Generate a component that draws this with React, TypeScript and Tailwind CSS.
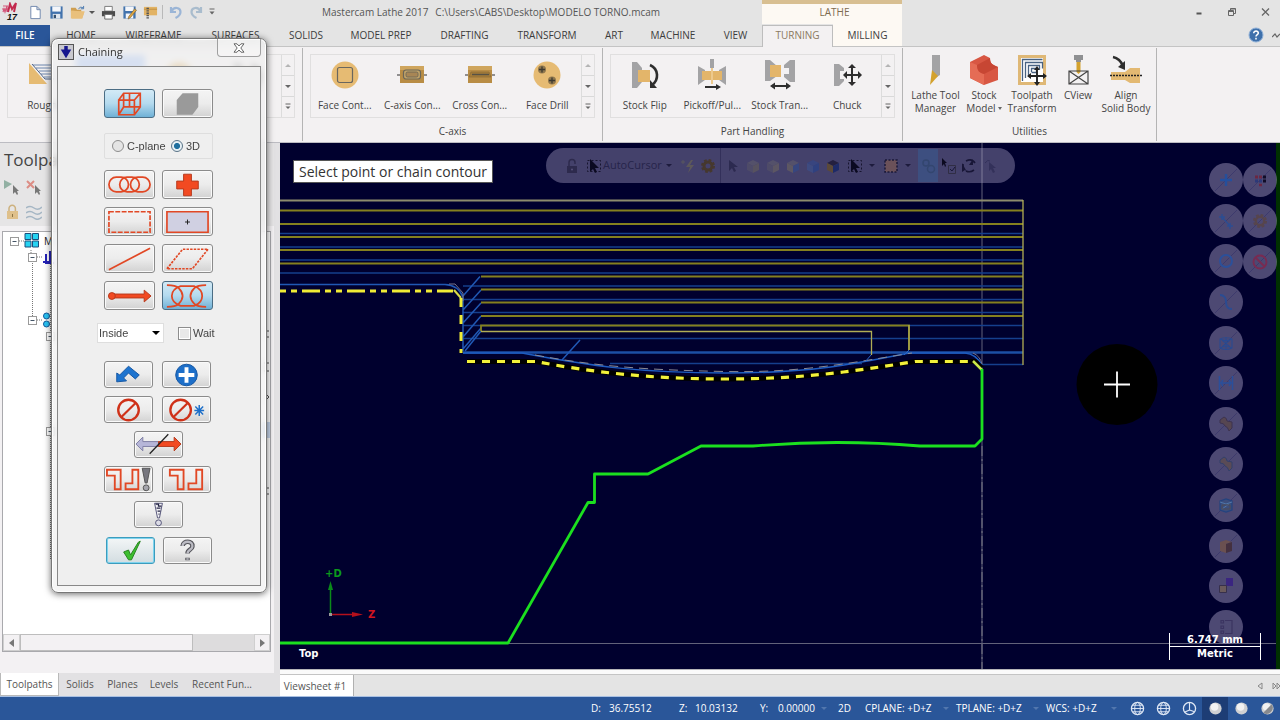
import React from "react";
import type { ReactNode } from "react";

type IconProps = { children: ReactNode; box?: string; className?: string };

function Icon({ children, box = "0 0 16 16", className = "size-4" }: IconProps) {
  return (
    <svg viewBox={box} className={className} fill="none" aria-hidden="true">
      {children}
    </svg>
  );
}

/* ---------- title bar ---------- */

const quickIcons: { label: string; art: ReactNode }[] = [
  { label: "New", art: <path d="M3 1.500h6.500l3.500 3.500v9.500h-10zM9.500 1.500v3.500h3.500" fill="#fff" stroke="#6f86ad" /> },
  {
    label: "Save",
    art: (
      <>
        <path d="M1.500 1.500h13v13h-13z" fill="#4273ad" />
        <path d="M3.500 1.500h9v5.500h-9z" fill="#f4f6fa" />
        <path d="M4 9.500h8v5H4z" fill="#dfe6ef" />
        <path d="M5 10.500h2.500v3.500H5z" fill="#35506f" />
      </>
    ),
  },
  {
    label: "Open",
    art: (
      <>
        <path d="M1 3h5l1.500 2H12v3H1z" fill="#cf9f51" />
        <path d="M1 14.500V6h3L2 14.500h11l2.500-7.500H4z" fill="#e9c07c" />
        <path d="M1 6h3l11.500 1-2.500 7.500H1z" fill="#e9c07c" />
        <path d="M9 4q2.500-3 5-1M14.500 1v3h-3" stroke="#4776ad" />
      </>
    ),
  },
];

const quickIcons2: { label: string; art: ReactNode }[] = [
  {
    label: "Print",
    art: (
      <>
        <path d="M4 1.500h8v5H4z" fill="#fff" stroke="#777" />
        <path d="M1 6.500h14v5.500H1z" fill="#4c4c4c" />
        <path d="M4 10h8v5H4z" fill="#fff" stroke="#666" />
      </>
    ),
  },
  {
    label: "Save as",
    art: (
      <>
        <path d="M1.500 1.500h13v13h-13z" fill="#4273ad" />
        <path d="M3.500 1.500h9v5h-9zM4 9h8v5.500H4z" fill="#f4f6fa" />
        <path d="M7 12.500L13.500 4l2 1.500-6.500 8-2.500 1.500z" fill="#e0a63f" stroke="#6b5a38" strokeWidth=".6" />
      </>
    ),
  },
  {
    label: "Zip",
    art: (
      <>
        <path d="M1 2h14v9H1z" fill="#e2b365" />
        <path d="M1 4.500h14" stroke="#c18f3e" />
        <path d="M5 3v12" stroke="#555" strokeWidth="2.600" strokeDasharray="1.500 1" />
      </>
    ),
  },
];

function QuickButton({ label, art }: { label: string; art: ReactNode }) {
  return (
    <button aria-label={label} className="flex size-4 items-center justify-center">
      <Icon className="size-[15px]">{art}</Icon>
    </button>
  );
}

function TitleBar() {
  return (
    <div className="flex h-[24px] bg-[#e4e4e4]">
      <div className="flex w-[322px] shrink-0 items-center pl-px">
        <svg viewBox="0 0 18 20" className="h-[20px] w-[18px]" fill="none" aria-hidden="true">
          <path d="M2 4h5M1 7h6M2 10l1-3 1 3 2-6v6" stroke="#d4567a" strokeWidth="1.200" />
          <path d="M7 10l2-8 2 5 4-6-2 9" stroke="#c22a4e" strokeWidth="2" />
          <text x="6" y="18" fontSize="9" fontWeight="700" fontStyle="italic" fill="#111" fontFamily="Liberation Sans, sans-serif">17</text>
        </svg>
        <div className="ml-2 flex items-center gap-[5px]">
          {quickIcons.map((q) => (
            <QuickButton key={q.label} {...q} />
          ))}
        </div>
        <span className="ml-1 border-x-[3px] border-t-[3px] border-x-transparent border-t-[#555]" />
        <div className="ml-[5px] flex items-center gap-[5px]">
          {quickIcons2.map((q) => (
            <QuickButton key={q.label} {...q} />
          ))}
        </div>
        <span className="ml-[4px] mr-[5px] h-[14px] w-px bg-[#b9b9b9]" />
        <div className="flex items-center gap-1">
          <button aria-label="Undo" className="size-4">
            <Icon><path d="M3 3v5h5M3.500 7.500C6 2 12.500 3.500 12.500 8c0 3-2 4.500-5 6" stroke="#9bb5d6" strokeWidth="2.200" /></Icon>
          </button>
          <button aria-label="Redo" className="size-4">
            <Icon><path d="M13 3v5H8M12.500 7.500C10 2 3.500 3.500 3.500 8c0 3 2 4.500 5 6" stroke="#a9bccd" strokeWidth="2.200" /></Icon>
          </button>
          <Icon className="size-2" box="0 0 8 8"><path d="M1.500 1h5" stroke="#666" /><path d="M1.500 3.500h5L4 6.500z" fill="#666" /></Icon>
        </div>
      </div>
      <div className="flex w-[440px] shrink-0 items-center gap-[7px] text-[#555]">
        <span>Mastercam Lathe 2017</span>
        <span>C:\Users\CABS\Desktop\MODELO TORNO.mcam</span>
      </div>
      <div className="flex w-[140px] shrink-0 items-center justify-center border-t-[4px] border-[#d8bf91] bg-[#fdf9f3] pl-[5px] pb-[4px] text-[#7d6b4f]">
        LATHE
      </div>
      <div className="flex flex-1 items-center justify-end gap-[17px] pr-[7px]">
        <button aria-label="Minimize" className="size-4"><Icon><path d="M5.500 9.500h5" stroke="#555" strokeWidth="2" /></Icon></button>
        <button aria-label="Restore" className="size-4">
          <Icon><path d="M6.500 6.500v-2h5v5h-2M4.500 6.500h5v5h-5zM4.500 7.500h5M6.500 5h5" stroke="#666" /></Icon>
        </button>
        <button aria-label="Close" className="size-4"><Icon><path d="M5 4.500l7 7M12 4.500l-7 7" stroke="#666" strokeWidth="1.300" /></Icon></button>
      </div>
    </div>
  );
}

function Tab({ width, children }: { width: string; children: ReactNode }) {
  return <button className={`shrink-0 text-center text-[#3c3c3c] ${width}`}>{children}</button>;
}

function TabRow() {
  return (
    <div className="flex h-[23px] border-b border-[#c4c4c4] bg-[#e4e4e4]">
      <button className="mt-px w-[50px] shrink-0 bg-[#2a5699] font-semibold text-white">FILE</button>
      <Tab width="w-[62px]">HOME</Tab>
      <Tab width="w-[83px]">WIREFRAME</Tab>
      <Tab width="w-[81px]">SURFACES</Tab>
      <Tab width="w-[60px]">SOLIDS</Tab>
      <Tab width="w-[90px]">MODEL PREP</Tab>
      <Tab width="w-[77px]">DRAFTING</Tab>
      <Tab width="w-[88px]">TRANSFORM</Tab>
      <Tab width="w-[46px]">ART</Tab>
      <Tab width="w-[72px]">MACHINE</Tab>
      <Tab width="w-[53px]">VIEW</Tab>
      <button className="-mb-px mt-px w-[71px] shrink-0 border border-b-0 border-[#bdbdbd] bg-[#f3f1f2] pb-[3px] text-[#8a7960]">TURNING</button>
      <button className="w-[69px] shrink-0 bg-[#fdf9f3] text-[#3c3c3c]">MILLING</button>
      <div className="flex flex-1 items-center justify-end gap-2 overflow-hidden">
        <button aria-label="Help" className="size-4">
          <Icon>
            <circle cx="8" cy="8" r="7" fill="#3e70ab" stroke="#8fb0d8" />
            <path d="M5.700 6.200C5.700 3.300 10.500 3.400 10.300 6.200 10.200 7.600 8 7.700 8 9.600M8 10.800v1.700" stroke="#fff" strokeWidth="1.500" />
          </Icon>
        </button>
        <button aria-label="Collapse ribbon" className="h-4 w-2">
          <Icon className="h-4 w-2" box="0 0 8 16"><path d="M0 10l3-3 2 3 3-3" stroke="#666" strokeWidth="1.200" /></Icon>
        </button>
      </div>
    </div>
  );
}

/* ---------- ribbon ---------- */

function GalleryScroll() {
  return (
    <div className="flex w-[13px] shrink-0 flex-col divide-y divide-[#d9d9d9] border-l border-[#dcdcdc]">
      <button aria-label="Scroll up" className="flex flex-1 items-center justify-center">
        <span className="border-x-[3px] border-b-[3px] border-x-transparent border-b-[#b5b5b5]" />
      </button>
      <button aria-label="Scroll down" className="flex flex-1 items-center justify-center">
        <span className="border-x-[3px] border-t-[3px] border-x-transparent border-t-[#666]" />
      </button>
      <button aria-label="More" className="flex flex-1 items-center justify-center">
        <Icon className="size-2" box="0 0 8 8"><path d="M1.500 1h5" stroke="#666" /><path d="M1.500 3.500h5L4 6z" fill="#666" /></Icon>
      </button>
    </div>
  );
}

function GalleryItem({ label, art }: { label: string; art: ReactNode }) {
  return (
    <button className="flex flex-1 flex-col items-center whitespace-nowrap pt-[3px] text-[#444]">
      <Icon box="0 0 32 32" className="size-8">{art}</Icon>
      <span className="mt-[7px] leading-4">{label}</span>
    </button>
  );
}

function RibbonGroup({ title, children }: { title: string; children: ReactNode }) {
  return (
    <section className="my-px flex w-[300px] shrink-0 flex-col border-r border-[#b4b4b4] px-[7px] pt-[6px]">
      <div className="flex h-[64px] border border-[#e0dfdf]">
        <div className="flex flex-1">{children}</div>
        <GalleryScroll />
      </div>
      <div className="mt-[5px] text-center leading-4 text-[#444]">{title}</div>
    </section>
  );
}

const faceContour = (
  <>
    <circle cx="16" cy="17" r="13.500" fill="#e6bb73" />
    <rect x="8.500" y="9.500" width="15" height="15" rx="2" stroke="#6a675f" strokeWidth="1.200" />
  </>
);
const cAxisContour = (
  <>
    <path d="M1 17h30" stroke="#4d4d4d" strokeWidth="1.200" />
    <path d="M4 8h24v17H4z" fill="#b98d45" /><path d="M4 8h24v4H4z" fill="#cfa55d" />
    <rect x="7.500" y="12" width="17" height="9" rx="2.500" fill="#c3a468" stroke="#6b6658" strokeWidth="1.200" />
    <rect x="10" y="14" width="12" height="5" rx="1.500" fill="#a88655" stroke="#6b6658" strokeWidth=".9" />
  </>
);
const crossContour = (
  <>
    <path d="M1 17h30" stroke="#4d4d4d" strokeWidth="1.200" />
    <path d="M4 8h24v17H4z" fill="#b98d45" /><path d="M4 8h24v4H4z" fill="#cfa55d" />
    <path d="M5 19l2-5h18l2 5z" fill="#a67d3a" stroke="#8a6b35" strokeWidth=".7" />
    <path d="M8 16.500h17" stroke="#575245" strokeWidth="1.500" />
  </>
);
const faceDrill = (
  <>
    <circle cx="16" cy="17" r="13.500" fill="#e6bb73" />
    <g fill="#8f774d">
      <circle cx="11" cy="11.500" r="4" /><circle cx="21" cy="22.500" r="4" />
      <path d="M11 8.500v6M8 11.500h6M21 19.500v6M18 22.500h6" stroke="#3d3930" strokeWidth="1.300" />
    </g>
  </>
);
const stockFlip = (
  <>
    <path d="M3 4h5l5 6v14l-5 6H3z" fill="#a3a3a5" />
    <path d="M9 12h12v12H9z" fill="#e3b56a" />
    <path d="M21 7c9 4 9 15 2 20" stroke="#2e2e2e" strokeWidth="2.600" />
    <path d="M21 22v8h7z" fill="#2e2e2e" />
  </>
);
const pickoff = (
  <>
    <path d="M2 8l7 4v10l-7 5zM30 8l-7 4v10l7 5zM14 1h4v9h-4z" fill="#a3a3a5" />
    <path d="M6 13h20v9H6z" fill="#e3b56a" /><path d="M16 10v16" stroke="#edc98d" strokeWidth="2" />
    <path d="M9 29h13" stroke="#2e2e2e" strokeWidth="2" /><path d="M20 26l5 3-5 3z" fill="#2e2e2e" />
  </>
);
const stockTransfer = (
  <>
    <path d="M1 2h5l7 6v10l-7 5H1zM31 2h-5l-6 5v3h5v6h-5v3l6 5h5z" fill="#a3a3a5" />
    <path d="M6 7h11v12H6z" fill="#e3b56a" />
    <path d="M9 28h15" stroke="#2e2e2e" strokeWidth="2" />
    <path d="M11 24.500L6 28l5 3.500zM22 24.500l5 3.500-5 3.500z" fill="#2e2e2e" />
  </>
);
const chuck = (
  <>
    <path d="M3 6h5l5 4v3H9v8h4v2l-5 5H3z" fill="#a3a3a5" />
    <path d="M13 17h16M21 9v16" stroke="#2e2e2e" strokeWidth="2" />
    <path d="M12 17l4-4v8zM31 17l-4-4v8zM21 6l-4 4h8zM21 28l-4-4h8z" fill="#2e2e2e" />
  </>
);
const rough = (
  <>
    <path d="M3 5l18 21H3z" fill="#e6bb73" />
    <path d="M7 7h20M10 10h17M13 13h14M15 16h12M18 19h9" stroke="#6c86ae" />
    <path d="M6 6l13 15h9" stroke="#4e6487" />
  </>
);

function UtilityButton({ width, lines, art, menu }: { width: string; lines: string[]; art: ReactNode; menu?: boolean }) {
  return (
    <button className={`flex shrink-0 flex-col items-center text-[#444] ${width}`}>
      <Icon box="0 0 32 32" className="size-8">{art}</Icon>
      {lines.map((line, i) => (
        <span key={line} className={`flex items-center gap-[2px] whitespace-nowrap leading-[13px] ${i === 0 ? "mt-[3px]" : ""}`}>
          {line}
          {menu && i === 1 && <span className="border-x-[2px] border-t-[3px] border-x-transparent border-t-[#666]" />}
        </span>
      ))}
    </button>
  );
}

function Ribbon() {
  return (
    <div className="flex h-[96px] overflow-hidden border-b border-[#bcbcc2] bg-[#f3f1f2]">
      <section className="my-px flex w-[303px] shrink-0 flex-col border-r border-[#b4b4b4] px-[7px] pt-[6px]">
        <div className="flex h-[64px] border border-[#e0dfdf]">
          <div className="flex flex-1">
            <GalleryItem label="Rough" art={rough} />
            <div className="h-full flex-1 bg-[#a9c4f2]" />
            <div className="flex flex-1 justify-center pt-1"><Icon box="0 0 32 32" className="size-8">{faceContour}</Icon></div>
            <div className="flex flex-1 justify-center pt-1"><Icon box="0 0 32 32" className="size-8">{stockFlip}</Icon></div>
          </div>
          <GalleryScroll />
        </div>
      </section>
      <RibbonGroup title="C-axis">
        <GalleryItem label="Face Cont..." art={faceContour} />
        <GalleryItem label="C-axis Con..." art={cAxisContour} />
        <GalleryItem label="Cross Con..." art={crossContour} />
        <GalleryItem label="Face Drill" art={faceDrill} />
      </RibbonGroup>
      <RibbonGroup title="Part Handling">
        <GalleryItem label="Stock Flip" art={stockFlip} />
        <GalleryItem label="Pickoff/Pul..." art={pickoff} />
        <GalleryItem label="Stock Tran..." art={stockTransfer} />
        <GalleryItem label="Chuck" art={chuck} />
      </RibbonGroup>
      <section className="my-px flex w-[254px] shrink-0 flex-col border-r border-[#b4b4b4] pt-[6px]">
        <div className="flex h-[64px] pl-[6px]">
          <UtilityButton
            width="w-[53px]"
            lines={["Lathe Tool", "Manager"]}
            art={<><path d="M12 1h8v20l-8 5z" fill="#a3a3a5" /><path d="M12 16l6 6-8 9z" fill="#d3a12d" /></>}
          />
          <UtilityButton
            width="w-[44px]"
            lines={["Stock", "Model"]}
            menu
            art={
              <>
                <path d="M2 8l14-7 6 3c0 6 3 7 8 9v13l-14 5-14-7z" fill="#d85743" />
                <path d="M2 8l7 3c0 6 3 8 7 9v11L2 24z" fill="#e56c55" />
                <path d="M9 11l13-7c0 6 3 7 8 9l-14 7c-4-1-7-3-7-9z" fill="#c74633" />
              </>
            }
          />
          <UtilityButton
            width="w-[52px]"
            lines={["Toolpath", "Transform"]}
            art={
              <>
                <path d="M2 1h28v30H2z" fill="#dfb876" /><path d="M5 4h22v24H5z" fill="#fff" />
                <path d="M6.500 27V5.500h20M9.500 24V8.500h17v6M12.500 21v-9.500h11v4M15.500 18v-3.500h5v4h-5" stroke="#496383" strokeWidth="1.300" />
                <path d="M13 22h16M21 14v16" stroke="#222" strokeWidth="1.900" />
                <path d="M11 22l4-3v6zM31 22l-4-3v6zM21 12l-3 4h6zM21 32l-3-4h6z" fill="#222" />
              </>
            }
          />
          <UtilityButton
            width="w-[40px]"
            lines={["CView"]}
            art={
              <>
                <path d="M12 1h9v5h-2v2h-5V6h-2z" fill="#8f9092" /><path d="M14.500 8h4v10l-2 2-2-2z" fill="#d3a12d" />
                <path d="M7 17h19v13H7zM7 17l19 13M26 17L7 30" stroke="#444" strokeWidth="1.200" />
              </>
            }
          />
          <UtilityButton
            width="w-[56px]"
            lines={["Align", "Solid Body"]}
            art={
              <>
                <path d="M1 18h14l5-4h10v15H20l-5-3H1z" fill="#e3b972" />
                <path d="M0 21.500h32" stroke="#222" strokeWidth="1.300" strokeDasharray="2 1" />
                <path d="M3 3c5 1 8 4 10 9" stroke="#2e2e2e" strokeWidth="2.600" /><path d="M15 16l-7-3 7-6z" fill="#2e2e2e" />
              </>
            }
          />
        </div>
        <div className="mt-[5px] text-center leading-4 text-[#444]">Utilities</div>
      </section>
    </div>
  );
}

/* ---------- left panel ---------- */

function ToolpathPanel() {
  return (
    <aside className="flex w-[280px] shrink-0 flex-col bg-[#e2e1e3]">
      <div className="flex flex-1 flex-col pr-[6px]">
        <div className="h-[83px] bg-[#e6e5e6] pl-1 pt-[4px]">
          <h2 className="text-[17px] leading-[26px] text-[#444]">Toolpaths</h2>
          <div className="mt-[6px] flex gap-1">
            <Icon><path d="M0 1l8 4-8 5z" fill="#92b0a3" /><path d="M9 6v9l2-2 2 3 1-1-1-3h2z" fill="#777" /></Icon>
            <Icon className="ml-[2px] size-4"><path d="M1 2l7 7M8 2L1 9" stroke="#dc8d85" strokeWidth="2" /><path d="M9 6v9l2-2 2 3 1-1-1-3h2z" fill="#777" /></Icon>
          </div>
          <div className="mt-[9px] flex gap-1">
            <Icon><path d="M3 7h11v8H3z" fill="#dfc08b" /><path d="M5 7V4.500a3.200 3.200 0 016.400 0V7" stroke="#cdb17f" strokeWidth="1.500" /><path d="M8.500 10v3" stroke="#8b7446" /></Icon>
            <Icon className="ml-[2px] size-4"><path d="M0 4q4-3 8 0t8-1M0 9q4-3 8 0t8-1M0 14q4-3 8 0t8-1" stroke="#a5b6c4" strokeWidth="1.500" /></Icon>
          </div>
        </div>
        <div className="flex flex-1 flex-col bg-[#f3f1f3] pt-[5px] pl-[2px] pr-[3px]">
          <div className="flex flex-1 flex-col border border-[#a9a9ad] bg-white">
            <div className="flex flex-1 justify-between overflow-hidden">
              <svg viewBox="0 0 60 340" className="h-[340px] w-[60px]" fill="none" aria-hidden="true">
                <path d="M16 9h6M28 18v7M34 25h6M29.500 31v53M34 88h6M47.500 30v298" stroke="#777" strokeDasharray="1 1" />
                <g fill="#fff" stroke="#9a9a9a">
                  <rect x="7.500" y="5.500" width="8" height="8" /><rect x="25.500" y="21.500" width="8" height="8" />
                  <rect x="25.500" y="84.500" width="8" height="8" /><rect x="43.500" y="100.500" width="8" height="8" /><rect x="43.500" y="195.500" width="8" height="8" />
                </g>
                <path d="M9.500 9.500h4M27.500 25.500h4M27.500 88.500h4M45.500 104.500h4M45.500 199.500h4" stroke="#456" />
                <path d="M22 1.500h6v6h-6zM29.500 1.500h6v6h-6zM22 9h6v6h-6zM29.500 9h6v6h-6z" fill="#25d3f2" stroke="#1c4f7c" />
                <path d="M43 22v9h8M47 19v12M40 30h8" stroke="#2523b8" strokeWidth="2" />
                <circle cx="43.500" cy="84" r="3" fill="#29c5f5" stroke="#125a9c" /><circle cx="43.500" cy="92" r="3" fill="#29c5f5" stroke="#125a9c" />
                <text x="41" y="13" fontSize="10" fill="#222">M</text>
              </svg>
              <svg viewBox="0 0 8 340" className="h-[340px] w-2" fill="none" aria-hidden="true">
                <path d="M3 105h4M3 99h4M2 131h5M4 131v8M2 139h5M3 161l4 4-4 4M3 256h4M3 262h4" stroke="#555" />
                <path d="M0 190h8v16H0z" fill="#c9d9ef" />
              </svg>
            </div>
            <div className="flex h-[17px] bg-[#dddcdd]">
              <button aria-label="Scroll left" className="flex w-[17px] items-center justify-center border border-[#cfcfcf] bg-[#f3f1f3]">
                <span className="border-y-[4px] border-r-[5px] border-y-transparent border-r-[#777]" />
              </button>
              <div className="w-[173px] border border-[#bdbdbd] bg-[#f3f1f3]" />
              <button aria-label="Scroll right" className="ml-auto flex w-[16px] items-center justify-center border border-[#cfcfcf] bg-[#f3f1f3]">
                <span className="border-y-[4px] border-l-[5px] border-y-transparent border-l-[#777]" />
              </button>
            </div>
          </div>
          <div className="h-[21px]" />
        </div>
      </div>
      <div className="flex h-[23px] text-[#555]">
        <button className="w-[59px] border border-t-0 border-[#b9b9b9] bg-white">Toolpaths</button>
        <button className="w-[42px]">Solids</button>
        <button className="w-[43px]">Planes</button>
        <button className="w-[40px]">Levels</button>
        <button className="w-[76px] whitespace-nowrap">Recent Fun...</button>
      </div>
    </aside>
  );
}

/* ---------- chaining dialog ---------- */

type DialogButtonProps = { label: string; children?: ReactNode; tone?: "plain" | "on" | "focus"; small?: boolean };

function DialogButton({ label, children, tone = "plain", small }: DialogButtonProps) {
  const tones = {
    plain: "border-[#8b8b8b] bg-linear-to-b from-[#f4f4f4] from-0% via-[#ececec] via-50% to-[#d2d2d2] to-100% shadow-[inset_0_0_0_1px_#fafafa]",
    on: "border-[#4b6d84] bg-linear-to-b from-[#d3eaf6] from-0% via-[#b4daee] via-50% to-[#6fb1d6] to-100%",
    focus: "border-[#3c9cbd] bg-linear-to-b from-[#f3f6f7] to-[#d3dde1] shadow-[inset_0_0_0_1px_#7fd3ee]",
  };
  return (
    <button
      aria-label={label}
      className={`flex items-center justify-center rounded-[3px] border ${small ? "h-[27px] w-[49px]" : "h-[29px] w-[51px]"} ${tones[tone]}`}
    >
      <svg viewBox="0 0 48 26" className="h-[26px] w-[47px]" fill="none" aria-hidden="true">
        {children}
      </svg>
    </button>
  );
}

function ChainingDialog() {
  return (
    <div
      role="dialog"
      aria-label="Chaining"
      className="absolute left-[51px] top-[38px] flex w-[216px] flex-col rounded-[7px] border border-[#777] bg-[#f0f0f0]/65 px-[5px] pb-[6px] shadow-[0_1px_7px_rgba(0,0,0,0.6),inset_0_0_0_1px_#fff] backdrop-blur-[3px]"
    >
      <div className="flex h-[27px] items-start">
        <div className="mt-[5px] ml-px flex size-[16px] items-center justify-center border border-[#555] bg-[#c9c9cf]">
          <Icon className="size-[14px]"><path d="M6 1h4v4h4l-6 10L2 5h4z" fill="#16168e" /></Icon>
        </div>
        <h3 className="ml-[4px] mt-[5px] text-[11px] leading-[16px] text-[#333]">Chaining</h3>
        <button aria-label="Close dialog" className="ml-auto flex h-[18px] w-[44px] items-center justify-center rounded-b-[4px] border border-t-0 border-[#a0a0a0] bg-white/30">
          <Icon box="0 0 12 10" className="h-[10px] w-[12px]"><path d="M1 .800h3L6 3l2-2.200h3L7.800 5 11 9.200H8L6 7 4 9.200H1L4.200 5z" fill="#fff" stroke="#666" /></Icon>
        </button>
      </div>
      <div className="flex flex-1 flex-col items-start border border-[#888] bg-[#efefef] pt-[22px] pb-[21px] pl-[46px]">
        <div className="flex gap-[7px]">
          <DialogButton label="Wireframe" tone="on">
            <path d="M13 9v15h16V9zM13 9l5-7h17v14l-6 8M29 9l6-7M18 2v14h17M18 16l-5 8M24 2v14" stroke="#e14825" strokeWidth="1.700" />
          </DialogButton>
          <DialogButton label="Solids">
            <path d="M13 9l6-7h16v14l-6 8H13z" fill="#9a9a9a" />
          </DialogButton>
        </div>
        <div className="mt-[15px] flex h-[26px] w-[109px] items-center rounded-[2px] border border-[#dedede] pl-[7px] font-['Liberation_Sans',sans-serif] text-[11px] text-[#444]">
          <input id="plane-c" name="plane" type="radio" className="size-3 appearance-none rounded-full border border-[#8d8d8d] bg-[#e4e4e4]" />
          <label htmlFor="plane-c" className="ml-[3px] w-[44px] whitespace-nowrap">C-plane</label>
          <input id="plane-3d" name="plane" type="radio" defaultChecked className="size-3 appearance-none rounded-full border border-[#5a7387] bg-[radial-gradient(#1f6f9f_38%,#e6f0f5_48%)]" />
          <label htmlFor="plane-3d" className="ml-[3px]">3D</label>
        </div>
        <div className="mt-[11px] grid grid-cols-[auto_auto] gap-x-[7px] gap-y-[8px]">
          <DialogButton label="Chain">
            <g stroke="#e14825" strokeWidth="1.800"><rect x="3" y="5" width="20" height="15" rx="7.500" /><rect x="14" y="5" width="20" height="15" rx="7.500" /><rect x="25" y="5" width="20" height="15" rx="7.500" /></g>
          </DialogButton>
          <DialogButton label="Point">
            <path d="M20 2h8v7h7v8h-7v7h-8v-7h-7V9h7z" fill="#f24a22" stroke="#b63a1e" />
          </DialogButton>
          <DialogButton label="Window"><path d="M3 2.500h42v21H3z" stroke="#e14825" strokeWidth="1.700" strokeDasharray="5 1.500" /></DialogButton>
          <DialogButton label="Area">
            <path d="M3 2.500h42v21H3z" fill="#d0d0e2" stroke="#e14825" strokeWidth="1.700" /><path d="M24 10.500v5M21.500 13h5" stroke="#222" />
          </DialogButton>
          <DialogButton label="Single"><path d="M3 24L45 2" stroke="#e14825" strokeWidth="1.800" /></DialogButton>
          <DialogButton label="Polygon"><path d="M3 23L19 3h26L29 23z" stroke="#e14825" strokeWidth="1.700" strokeDasharray="2.500 1.200" /></DialogButton>
          <DialogButton label="Vector">
            <path d="M6 11h33V7l7 6-7 6v-4H6z" fill="#f24a22" stroke="#b63a1e" /><circle cx="6" cy="13" r="3.500" fill="#f24a22" stroke="#b63a1e" />
          </DialogButton>
          <DialogButton label="Partial" tone="on">
            <g stroke="#e14825" strokeWidth="1.800">
              <path d="M3 2q9 0 12 3 4 4 4 8t-4 8q-3 3-12 3M43 2q-9 0-12 3-4 4-4 8t4 8q3 3 12 3" />
              <path d="M17 3h14q8 3 8 10t-8 10H17Q8 20 8 13t9-10z" />
            </g>
          </DialogButton>
        </div>
        <div className="mt-[13px] -ml-[7px] flex h-[20px] items-center font-['Liberation_Sans',sans-serif] text-[11px] text-[#444]">
          <div className="relative flex">
            <select aria-label="Selection area" className="h-[20px] w-[67px] appearance-none border border-[#dedede] bg-white pl-px text-[11px]">
              <option>Inside</option>
            </select>
            <span className="pointer-events-none absolute right-[4px] top-2 border-x-[4px] border-t-[4px] border-x-transparent border-t-black" />
          </div>
          <input id="wait" type="checkbox" className="ml-[14px] size-[13px] appearance-none border border-[#8d8d8d] bg-[#e8e8e8] shadow-[inset_0_0_0_1px_#fff]" />
          <label htmlFor="wait" className="ml-[2px]">Wait</label>
        </div>
        <div className="mt-[18px] flex flex-col gap-2">
          <div className="flex gap-[9px]">
            <DialogButton small label="Last">
              <path d="M12 20v-9l3 2 9-9 11 9-4 4-7-6-5 5 3 3z" fill="#1e74cf" stroke="#1657a3" />
            </DialogButton>
            <DialogButton small label="Add">
              <circle cx="24" cy="13" r="11" fill="#1d6fc9" stroke="#1657a3" /><path d="M24 5v16M16 13h16" stroke="#fff" strokeWidth="4" />
            </DialogButton>
          </div>
          <div className="flex gap-[9px]">
            <DialogButton small label="Unselect">
              <circle cx="24" cy="13" r="10.500" stroke="#cf3118" strokeWidth="2.400" /><path d="M17 20L31 6" stroke="#cf3118" strokeWidth="2.200" />
            </DialogButton>
            <DialogButton small label="Unselect all">
              <circle cx="18" cy="13" r="10.500" stroke="#cf3118" strokeWidth="2.400" /><path d="M11 20L25 6" stroke="#cf3118" strokeWidth="2.200" />
              <path d="M37 8v11M33 9.500l8 8M41 9.500l-8 8M32 13.500h10" stroke="#1d6fc9" strokeWidth="1.500" />
            </DialogButton>
          </div>
          <div className="flex justify-center">
            <DialogButton small label="Reverse">
              <path d="M1 12l7-7v4.500h16v5H8V19z" fill="#b6b6d8" stroke="#8080a5" /><path d="M47 12l-7-7v4.500H24v5h16V19z" fill="#f24a22" stroke="#b63a1e" />
              <path d="M15 22L34 2" stroke="#222" strokeWidth="1.300" />
            </DialogButton>
          </div>
          <div className="flex gap-[9px]">
            <DialogButton small label="Chain feature options">
              <path d="M2 2.500h14v20h-6v-14H2zM28 2.500h6v20H21v-6h7z" stroke="#e14825" strokeWidth="1.900" />
              <path d="M38 1h8l-3 15h-2z" fill="#77777f" stroke="#555" /><circle cx="42" cy="21" r="3" fill="#a5a5ad" stroke="#555" />
            </DialogButton>
            <DialogButton small label="Chain feature">
              <path d="M7 2.500h14v20h-6v-14H7zM34 2.500h6v20H26v-6h8z" stroke="#e14825" strokeWidth="1.900" />
            </DialogButton>
          </div>
          <div className="flex justify-center">
            <DialogButton small label="Options">
              <path d="M20 1h8l-3 15h-2z" fill="#f3f3f6" stroke="#56567a" /><path d="M21 2h3v2h3M22 6h4M23 9h3M24 12h1" stroke="#252545" strokeWidth="1.300" />
              <circle cx="24" cy="21" r="3" fill="#dcdce6" stroke="#56567a" />
            </DialogButton>
          </div>
          <div className="flex gap-2 pt-px pl-[2px]">
            <DialogButton small label="OK" tone="focus">
              <path d="M17 14l5-2 2 5 8-13 2-1-9 19h-3z" fill="#3cbf30" stroke="#26821f" />
            </DialogButton>
            <DialogButton small label="Help">
              <path d="M19 8c0-6 11-6 10 .500-.500 3.500-5 3-5 7M24 20v2.500" stroke="#55555b" strokeWidth="4.600" /><path d="M19 8c0-6 11-6 10 .500-.500 3.500-5 3-5 7M24 20.500v1.500" stroke="#bcbcc4" strokeWidth="2.400" />
            </DialogButton>
          </div>
        </div>
      </div>
    </div>
  );
}

/* ---------- graphics view ---------- */

const darkYellow = [210.5, 224, 237, 250, 263.5];
const shortYellow = [276.5, 289.5, 302.5, 316];
const longBlue = [233.5, 247, 260, 273];
const shortBlue = [286, 299.5, 312.5, 325.5, 338.5];

function Drawing() {
  return (
    <svg viewBox="280 143 1000 526" preserveAspectRatio="xMinYMin meet" className="absolute inset-0 h-full w-full" fill="none" role="img" aria-label="Toolpath preview">
      <path d="M982 143V669M508 643.500h768" stroke="#62627a" />
      <path d="M982 446V669" stroke="#777785" strokeDasharray="10 3 2 3" />
      <g stroke="#153f8d" strokeWidth="1.500">
        {longBlue.map((y) => <path key={y} d={`M280 ${y}H1023`} />)}
        {shortBlue.map((y) => <path key={y} d={`M463 ${y}H1023`} />)}
        <path d="M463 352.500H1023" stroke="#1c4fa5" strokeWidth="2.500" />
        <path d="M610 363.500H862M982 364.500h41" />
        <path d="M280 284.500H445Q458 285 463 297V351M480 276.500L463 296M481 290l-18 20M481 303l-18 20M481 316l-18 21M481 328l-18 21M481 331l-16 20M580 340l-18 20" stroke="#2058b4" />
        <path d="M463 353H522C590 366 640 373 725 373S850 365 909 353H965Q976 354 982 365" stroke="#1e5cc0" />
      </g>
      <path d="M535 355C600 367 650 370 725 371.500S850 363 912 353" stroke="#8a8b98" strokeDasharray="9 6" />
      <path d="M449 284h6l8 9v8M973 353q7 3 9 11" stroke="#77738d" />
      <path d="M280 200.500H1023" stroke="#8d8c6d" strokeWidth="1.800" />
      <g stroke="#85801f" strokeWidth="1.800">
        {darkYellow.map((y) => <path key={y} d={`M280 ${y}H1023`} />)}
        {shortYellow.map((y) => <path key={y} d={`M481 ${y}H1023`} />)}
        <path d="M481 331V325.500H909V350" />
      </g>
      <path d="M481 331.500H871.500V355M1023 200V365M909 325V350" stroke="#b1ad55" strokeWidth="1.300" />
      <path d="M871 355l-6 7M909 350l-5 5" stroke="#2a65c8" />
      <path d="M280 291H453" stroke="#f0ec35" strokeWidth="3" strokeDasharray="6 5 6 5 18 5" />
      <path d="M454 290l7 8" stroke="#d9dc48" strokeWidth="2" />
      <path d="M461 298V353" stroke="#f0ec35" strokeWidth="3" strokeDasharray="9 8" />
      <path d="M467 361.500H536C590 372 650 379 725 379S850 372 915 361.500H975L982 368" stroke="#000" strokeWidth="5" />
      <path d="M467 361.500H536C590 372 650 379 725 379S850 372 915 361.500H972" stroke="#f3f13a" strokeWidth="3.200" strokeDasharray="8 7" />
      <path d="M973 361l9 9" stroke="#c9e84a" strokeWidth="2.500" />
      <path d="M280 643H508L588 502.500H594.500V474H648L701 446H753Q838 439 920 446H975L982 439V369" stroke="#1be01f" strokeWidth="2.800" strokeLinejoin="round" />
      <path d="M330.500 614V588" stroke="#0b8a1a" strokeWidth="1.500" /><path d="M328 590l2.500-9 2.500 9z" fill="#0b8a1a" />
      <path d="M331 614.500h25" stroke="#b5101c" strokeWidth="1.500" /><path d="M352 612l11 2.500-11 2.500z" fill="#b5101c" />
      <rect x="329" y="613" width="3" height="3" fill="#999" />
      <g fontFamily="DejaVu Sans, sans-serif" fontSize="10" fontWeight="700">
        <text x="325" y="577" fill="#0b9a1c">+D</text>
        <text x="368" y="618" fill="#d0141f">Z</text>
      </g>
      <circle cx="1117" cy="384.500" r="40.500" fill="#000" />
      <path d="M1104 384.500h26M1117 371.500v26" stroke="#fff" strokeWidth="1.800" />
    </svg>
  );
}

function Dot() {
  return <span className="border-x-[3px] border-t-[3px] border-x-transparent border-t-[#1d1b3d]" />;
}

function Cube({ left, right, top }: { left: string; right: string; top: string }) {
  return (
    <Icon>
      <path d="M2 5l6-3 6 3-6 3z" fill={top} /><path d="M2 5l6 3v7l-6-3z" fill={left} /><path d="M14 5L8 8v7l6-3z" fill={right} />
    </Icon>
  );
}

function CursorBar() {
  return (
    <div className="absolute left-[266px] top-[5px] flex h-[35px] w-[469px] items-center rounded-full bg-[#aaa2c8]/40 pl-[18px] text-[11px]">
      <Icon><path d="M3 8h10v7H3z" fill="#2d2a4d" /><path d="M5 8V4.500a3 3 0 016 0V6" stroke="#2d2a4d" strokeWidth="1.500" /><circle cx="8" cy="11.500" r="1" fill="#56527a" /></Icon>
      <Icon className="ml-[6px] size-4"><path d="M1.500 2.500h13v11h-13z" stroke="#17152f" strokeDasharray="2 2" /><path d="M4 1v13l3-3 2 4 2-1-2-4h4z" fill="#0b0a20" /></Icon>
      <span className="ml-px mr-[6px] w-[57px] text-[#26244a]">AutoCursor</span>
      <Dot />
      <Icon className="ml-2 size-4 opacity-50"><path d="M3 2v4M1 4h4" stroke="#6c6c53" /><path d="M11 2L6 9h4l-2 6 6-8h-4l3-5z" fill="#77704a" /></Icon>
      <Icon className="ml-1 size-4"><circle cx="8" cy="8" r="4" stroke="#46382e" strokeWidth="3" /><circle cx="8" cy="8" r="6" stroke="#46382e" strokeWidth="2" strokeDasharray="2.700 2" /></Icon>
      <span className="mx-1 h-[35px] w-px bg-[#33305a]" />
      <div className="flex items-center gap-1">
        <Icon><path d="M4 2v11l3-3 2 4 2-1-2-4h4z" fill="#2c2a50" /></Icon>
        <Cube top="#54516a" left="#4e4b68" right="#57525f" />
        <Cube top="#54516a" left="#4e4b68" right="#5c5663" />
        <Cube top="#54516a" left="#5d5762" right="#37467f" />
        <Cube top="#38457f" left="#3e4b80" right="#2f4180" />
        <Cube top="#24203f" left="#5b4938" right="#1d2a68" />
      </div>
      <Icon className="ml-[6px] size-4"><path d="M1.500 2.500h13v11h-13z" stroke="#17152f" strokeDasharray="2 2" /><path d="M4 1v13l3-3 2 4 2-1-2-4h4z" fill="#0b0a20" /></Icon>
      <span className="ml-[6px] flex"><Dot /></span>
      <Icon className="ml-[8px] size-4"><path d="M2 2h12v12H2z" fill="#6b5159" stroke="#1b1838" strokeWidth="1.500" strokeDasharray="2 1.500" /></Icon>
      <span className="ml-[6px] flex"><Dot /></span>
      <span className="ml-[7px] flex h-[33px] w-5 items-center justify-center bg-[#3d4f80]">
        <Icon><circle cx="6" cy="5" r="3" stroke="#33466f" strokeWidth="1.500" /><circle cx="11" cy="11" r="3.500" stroke="#33466f" strokeWidth="1.500" /></Icon>
      </span>
      <Icon className="ml-[3px] size-4"><path d="M1 0v8l2-2 1 3 1-1-1-3h2z" fill="#0b0a20" /><path d="M7.500 7.500h7v8h-7z" stroke="#302e45" /><path d="M9 11l2 2 3-4" stroke="#181637" /></Icon>
      <Icon className="ml-1 size-4"><path d="M5 3q6-3 9 2M13 12q-4 3-8 1M2 12V6" stroke="#181637" strokeWidth="1.600" /><path d="M1 5v9l3-2 2 2M12 1v6h-4z" fill="#181637" /></Icon>
      <Icon className="ml-[6px] size-4"><path d="M2 5q3-4 5-2" stroke="#33315a" /><path d="M6 4v9l2-2 2 4 2-1-2-4h3z" fill="#33315a" /></Icon>
    </div>
  );
}

const surface = "M2 4l4-3q3 1 3 4l5 1v6l-3 3q-1-4-4-5-1-3-5-3z";

const roundArt: { label: string; art: ReactNode }[] = [
  { label: "Points", art: <path d="M8 2v12M2 8h12" stroke="#254f9c" strokeWidth="2.400" /> },
  { label: "Lines", art: <path d="M4 1v6M1 4h6M12 10v6M9 13h6M4 4l8 9" stroke="#2c4d92" strokeWidth="1.400" /> },
  { label: "Arcs", art: <circle cx="8" cy="8" r="6" stroke="#2b509a" strokeWidth="1.900" /> },
  { label: "Splines", art: <path d="M2 1q6 0 6 7t6 7" stroke="#2b4c92" strokeWidth="1.900" /> },
  { label: "Solids wireframe", art: <path d="M2 4q6-3 12 0v9q-6 3-12 0zM2 4q6 3 12 0M2 13q6-3 12 0M4 12l8-7M4 5l8 7M8 2v12" stroke="#2a4a90" strokeWidth="1.100" /> },
  { label: "Dimensions", art: <path d="M1.500 1v14M14.500 1v14M3 8h10M5 5L3 8l2 3M11 5l2 3-2 3" stroke="#2b4f9a" strokeWidth="1.500" /> },
  { label: "Surface edges", art: <path d={surface} fill="#564651" stroke="#3d3350" /> },
  { label: "Surfaces", art: <path d={surface} fill="#5a4b56" stroke="#33406a" /> },
  { label: "Solid edges", art: <><path d="M2 4l6-2 6 2v9l-6 2-6-2z" fill="#3c4e7d" stroke="#24437f" strokeWidth="1.200" /><path d="M2 5l6 2 6-2M4 12l7-5" stroke="#4f76a8" /><path d="M4 8h8v4H4z" stroke="#4d4a55" /></> },
  { label: "Solids", art: <><path d="M2 4l6 2v9l-6-2zM2 4l6-2 6 2-6 2z" fill="#6a5050" /><path d="M14 4L8 6v9l6-2z" fill="#44303f" /></> },
  { label: "Colors", art: <><path d="M8 0h7v8H8z" fill="#3a2580" /><path d="M1.500 7.500h7v7h-7z" fill="#6a5a5b" stroke="#37304c" /></> },
  { label: "Levels", art: <path d="M7 1.500h7v13H7M3 1.500h2.500v2.500H3zM3 7h2.500v2.500H3zM3 12h2.500v2.500H3z" stroke="#3b3461" strokeWidth="1.200" /> },
];

const sideArt: { label: string; art: ReactNode }[] = [
  { label: "Mask", art: <><path d="M3 5h3M7 5h3" stroke="#6b2742" strokeWidth="3" /><path d="M11 5h3M11 9h3" stroke="#100c28" strokeWidth="3" /><path d="M3 9h3M7 9h3" stroke="#2c3978" strokeWidth="3" /><path d="M7 13h3" stroke="#6b2742" strokeWidth="2.500" /></> },
  { label: "Mask settings", art: <><circle cx="8" cy="8" r="4.200" stroke="#57454c" strokeWidth="2.400" /><circle cx="8" cy="8" r="6" stroke="#57454c" strokeWidth="2" strokeDasharray="2.700 2" /></> },
  { label: "Clear mask", art: <><circle cx="8" cy="8" r="6.500" stroke="#782b52" strokeWidth="1.900" /><path d="M3.500 3.500l9 9" stroke="#782b52" strokeWidth="1.900" /></> },
];

function RoundButton({ label, art, slash = true }: { label: string; art: ReactNode; slash?: boolean }) {
  return (
    <button aria-label={label} className="flex size-[34px] items-center justify-center rounded-full bg-[#aaa2c8]/45">
      <svg viewBox="-9 -9 34 34" className="size-[34px]" fill="none" aria-hidden="true">
        {slash && <path d="M-3 19L19 -3" stroke="#37346a" strokeWidth=".7" />}
        {art}
      </svg>
    </button>
  );
}

function GraphicsView() {
  return (
    <section className="flex min-w-0 flex-1 flex-col">
      <div className="relative flex-1 overflow-hidden bg-[#00002e]">
        <Drawing />
        <div className="absolute inset-y-0 right-0 w-[4px] bg-[#003000]" />
        <div className="absolute left-[13px] top-[17px] border border-[#555] bg-white px-[5px] text-[14px] leading-[21px] whitespace-nowrap text-[#333]">
          Select point or chain contour
        </div>
        <CursorBar />
        <div className="absolute right-[3px] top-[20px] flex h-[481px] items-start">
          <div className="flex h-full flex-col justify-between">
            {roundArt.map((b, i) => <RoundButton key={b.label} {...b} slash={i < 10} />)}
          </div>
          <div className="flex h-[116px] flex-col justify-between">
            {sideArt.map((b) => <RoundButton key={b.label} {...b} />)}
          </div>
        </div>
        <span className="absolute bottom-[8px] left-[19px] font-['DejaVu_Sans',sans-serif] text-[10px] leading-[14px] font-bold text-white">Top</span>
        <div className="absolute bottom-[9px] right-[19px] flex w-[92px] flex-col items-center border-x border-white font-['DejaVu_Sans',sans-serif] text-[10px] leading-[13px] font-bold text-white">
          <span className="w-full border-b border-white text-center">6.747 mm</span>
          <span>Metric</span>
        </div>
      </div>
      <div className="flex h-[27px] flex-col border-t border-[#b5b5b9] bg-[#fafafa] pt-[4px]">
        <div className="flex flex-1 border-t border-[#c4c4c4] bg-[#e4e4e4] text-[#555]">
          <button className="w-[74px] border-r border-[#b0b0b0] bg-white pr-[3px] pt-[2px] whitespace-nowrap">Viewsheet #1</button>
          <div className="ml-auto flex items-center gap-2">
            <button aria-label="Previous sheet"><Icon className="size-2" box="0 0 8 8"><path d="M6 1v6L2 4z" stroke="#888" /></Icon></button>
            <button aria-label="Last sheet"><Icon className="size-2" box="0 0 8 8"><path d="M1 1v6l3-3zM5 1v6l3-3z" stroke="#888" /></Icon></button>
          </div>
        </div>
      </div>
    </section>
  );
}

/* ---------- status bar ---------- */

function Caret() {
  return <span className="border-x-[3px] border-t-[3px] border-x-transparent border-t-[#5277ae]" />;
}

function Globe({ half }: { half?: boolean }) {
  return (
    <Icon className="size-[15px]">
      <circle cx="8" cy="8" r="6.500" stroke="#dfe8f5" strokeWidth="1.400" />
      {half ? (
        <path d="M8 1.500v8M8 9.500L2.500 12M8 9.500l5.500 2" stroke="#dfe8f5" strokeWidth="1.200" />
      ) : (
        <>
          <ellipse cx="8" cy="8" rx="3" ry="6.500" stroke="#dfe8f5" />
          <path d="M1.500 8h13M3 4.500h10M3 11.500h10" stroke="#dfe8f5" />
        </>
      )}
    </Icon>
  );
}

function Ball({ split }: { split?: boolean }) {
  return (
    <Icon className="size-[15px]">
      <circle cx="8" cy="8" r="6.500" fill="#cfd0d2" /><circle cx="7" cy="6.500" r="4" fill="#f2f2f2" />
      {split && <path d="M12.500 3.500a6.500 6.500 0 01-9 9z" fill="#86898e" />}
    </Icon>
  );
}

const shading = [
  { name: "Wireframe", art: <Globe /> },
  { name: "Dimmed wireframe", art: <Globe /> },
  { name: "Hidden lines", art: <Globe half /> },
  { name: "Outline shaded", art: <Ball />, active: true },
  { name: "Shaded", art: <Ball /> },
  { name: "Translucent", art: <Ball split /> },
];

function StatusBar() {
  return (
    <footer className="flex h-[24px] items-center justify-end overflow-hidden border-t border-[#a9c0e2] bg-[#2a5699] text-white">
      <span className="w-[18px]">D:</span><span className="w-[70px]">36.75512</span>
      <span className="w-[16px]">Z:</span><span className="w-[65px]">10.03132</span>
      <span className="w-[18px]">Y:</span><span className="w-[43px]">0.00000</span><Caret />
      <span className="ml-[11px] w-[27px]">2D</span>
      <span className="w-[78px] whitespace-nowrap">CPLANE: +D+Z</span><Caret />
      <span className="ml-[7px] w-[77px] whitespace-nowrap">TPLANE: +D+Z</span><Caret />
      <span className="ml-[7px] w-[65px] whitespace-nowrap">WCS: +D+Z</span><Caret />
      <div className="ml-[7px] flex h-full items-center">
        {shading.map((mode) => (
          <button
            key={mode.name}
            aria-label={mode.name}
            className={`flex h-full w-[26px] items-center justify-center ${mode.active ? "bg-[#1d3d75]" : ""}`}
          >
            {mode.art}
          </button>
        ))}
      </div>
    </footer>
  );
}

export default function App() {
  return (
    <div className="relative flex min-h-screen flex-col overflow-hidden bg-[#e4e4e4] font-['Open_Sans','Noto_Sans',sans-serif] text-[10px]">
      <header>
        <TitleBar />
        <TabRow />
        <Ribbon />
      </header>
      <main className="flex flex-1">
        <ToolpathPanel />
        <GraphicsView />
      </main>
      <StatusBar />
      <ChainingDialog />
    </div>
  );
}
